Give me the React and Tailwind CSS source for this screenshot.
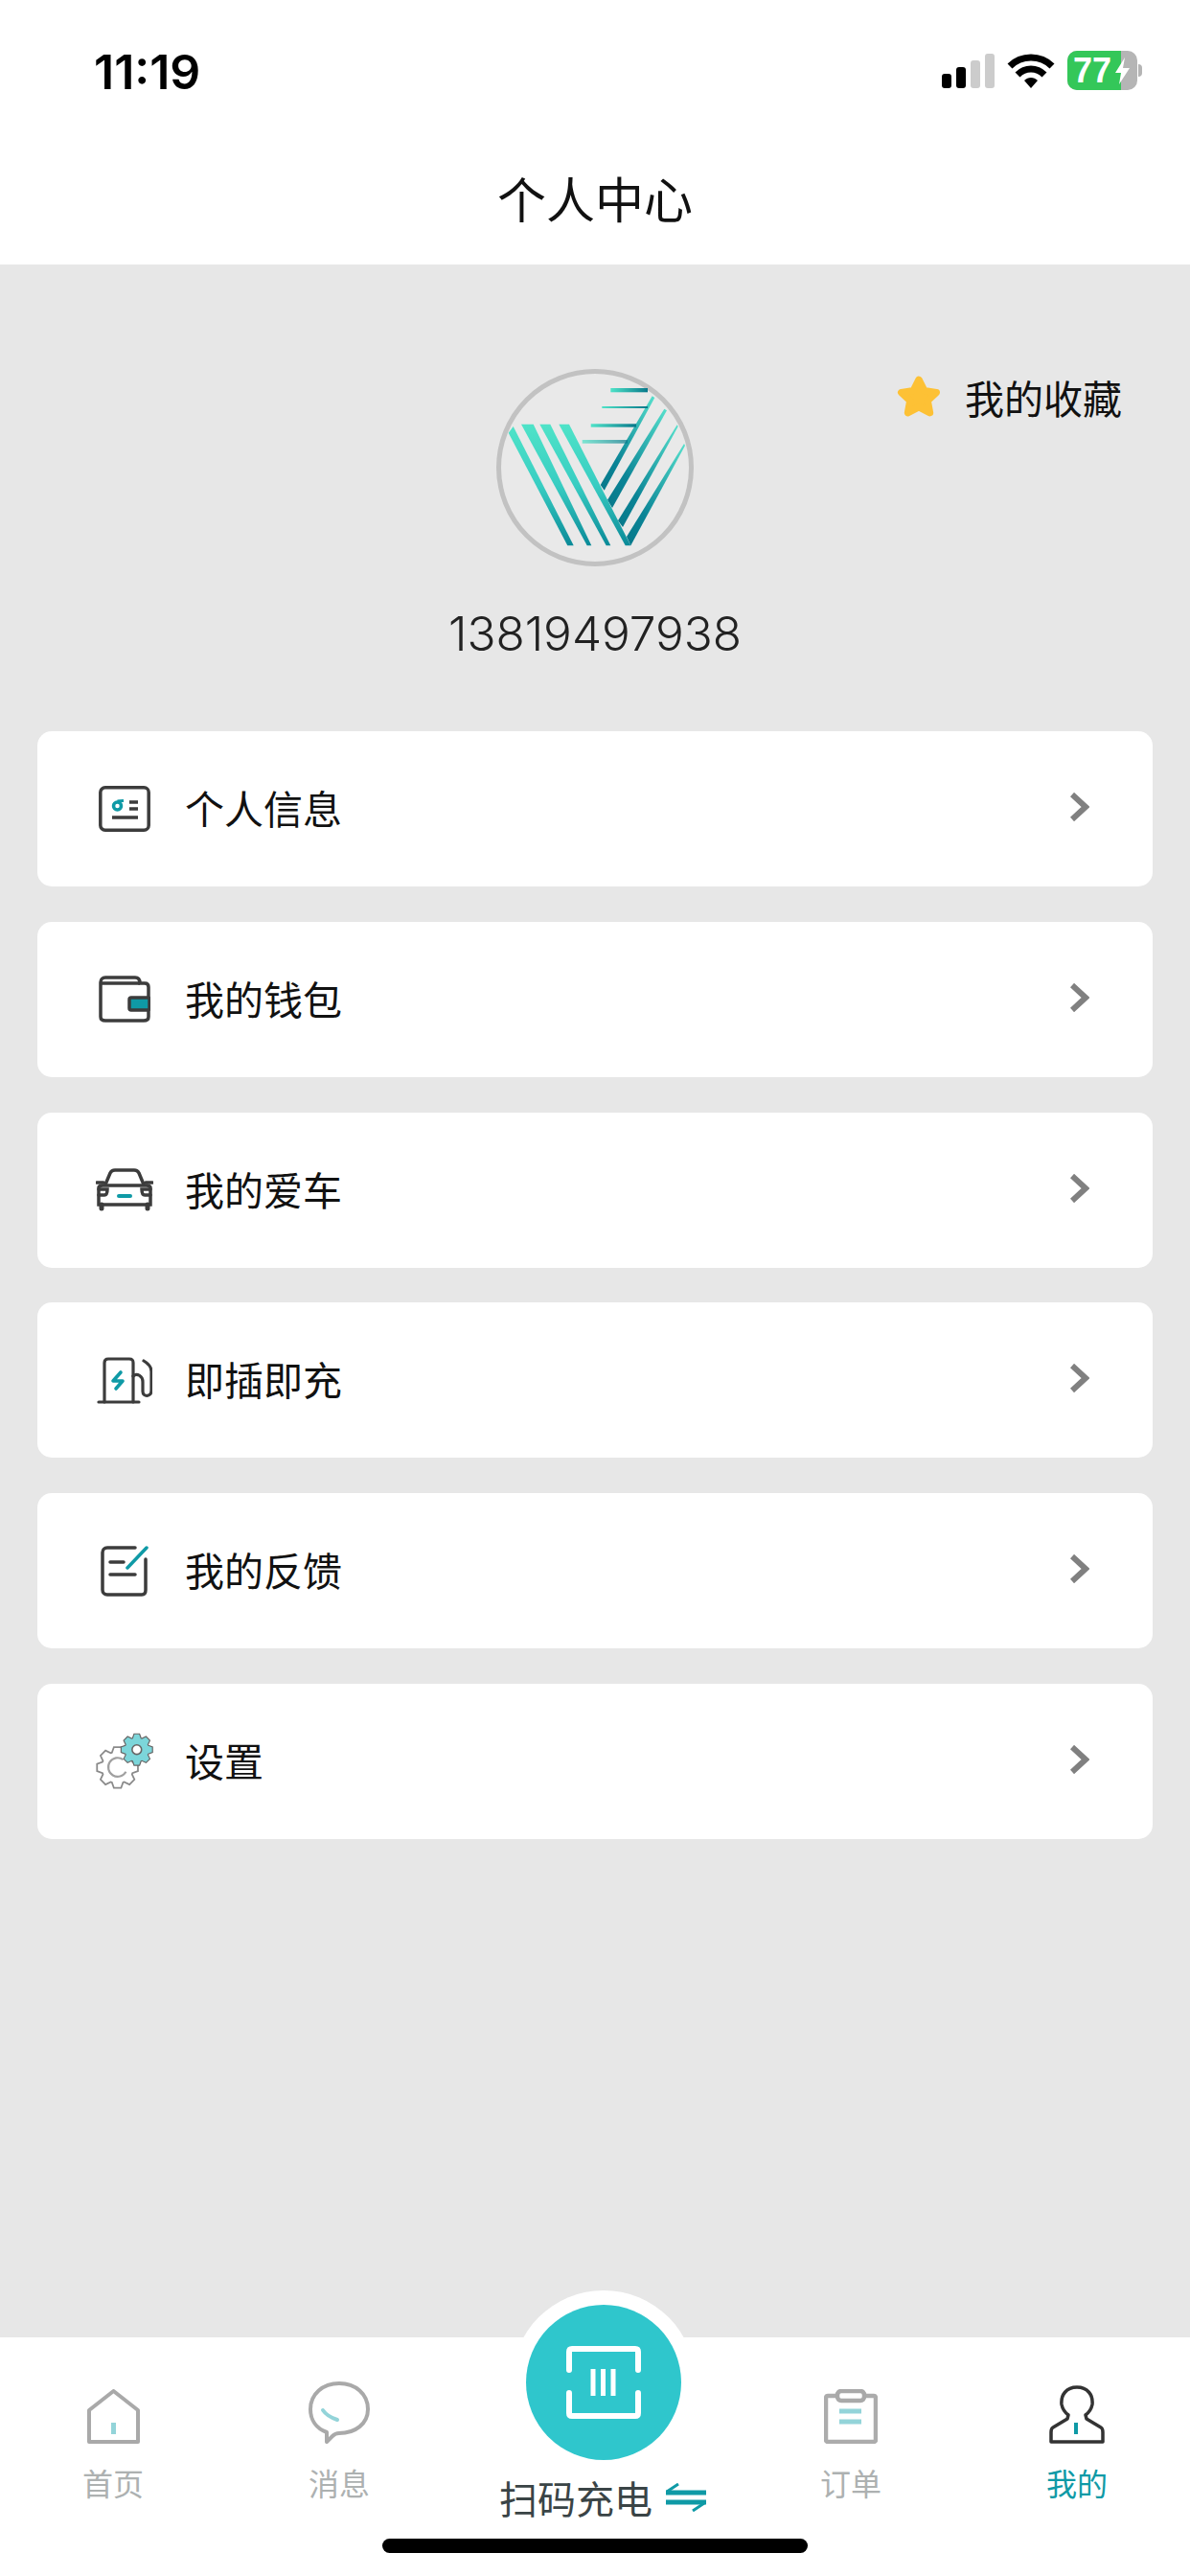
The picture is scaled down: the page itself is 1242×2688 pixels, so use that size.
import { useId } from "react";

const font = { fontFamily: '"Noto Sans CJK SC", "Noto Sans", sans-serif' };

function Signal() {
  return (
    <svg width="55" height="36" viewBox="0 0 55 36">
      <rect x="0" y="21" width="10" height="15" rx="3" fill="#000" />
      <rect x="15" y="14" width="10" height="22" rx="3" fill="#000" />
      <rect x="30" y="7" width="10" height="29" rx="3" fill="#ccc" />
      <rect x="45" y="0" width="10" height="36" rx="3" fill="#ccc" />
    </svg>
  );
}

function Wifi() {
  return (
    <svg width="50" height="38" viewBox="0 0 50 38" fill="none">
      <path d="M3 14 C15 2 35 2 47 14" stroke="#000" strokeWidth="7" />
      <path d="M11 23 C19 15 31 15 39 23" stroke="#000" strokeWidth="7" />
      <path d="M18 29 C22 25 28 25 32 29 L25 37 Z" fill="#000" />
    </svg>
  );
}

function Battery() {
  return (
    <div className="relative flex items-center">
      <div className="relative flex h-[41px] w-[73px] items-center overflow-hidden rounded-[10px] bg-[#b5b5b5]">
        <div className="absolute inset-y-0 left-0 w-[56px] bg-[#34c759]" />
        <span className="relative pl-[6px] text-[36px] font-bold leading-none text-white" style={{ fontFamily: '"Liberation Sans", sans-serif' }}>
          77
        </span>
        <svg className="absolute left-[49px] top-[7px]" width="17" height="28" viewBox="0 0 17 28">
          <path d="M11 0 L1 16 H7 L5 28 L16 11 H9 Z" fill="#fff" />
        </svg>
      </div>
      <div className="ml-[1px] h-[13px] w-[4px] rounded-r-full bg-[#b5b5b5]" />
    </div>
  );
}

function Logo() {
  const id = useId();
  const left = `${id}l`;
  const right = `${id}r`;
  const bar = `${id}b`;
  return (
    <svg width="208" height="208" viewBox="0 0 208 208">
      <defs>
        <linearGradient id={left} x1="0" y1="0" x2="0" y2="1">
          <stop offset="0" stopColor="#4fe3c8" />
          <stop offset="0.5" stopColor="#38cdc2" />
          <stop offset="1" stopColor="#0a8a98" />
        </linearGradient>
        <linearGradient id={right} x1="1" y1="0" x2="0" y2="1">
          <stop offset="0" stopColor="#56e0cc" />
          <stop offset="0.7" stopColor="#0a8496" />
          <stop offset="1" stopColor="#07788a" />
        </linearGradient>
        <linearGradient id={bar} x1="0" y1="0" x2="1" y2="0">
          <stop offset="0" stopColor="#4fe3c8" />
          <stop offset="1" stopColor="#07788a" />
        </linearGradient>
      </defs>
      <circle cx="104" cy="104" r="100.5" fill="#e9e9e9" stroke="#c2c2c2" strokeWidth="5" />
      {/* right strokes of the V */}
      <path d="M109.7 122 L163.7 29.3 L166.3 31 L113.7 127.7 Z" fill={`url(#${right})`} />
      <path d="M117 137.7 L176.3 42.7 L179 44.3 L122 146 Z" fill={`url(#${right})`} />
      <path d="M128 159.3 L189.7 59.3 L190.7 61 L133 166 Z" fill={`url(#${right})`} />
      <path d="M137 176 L197 79 L198 81 L141.3 185.3 Z" fill={`url(#${right})`} />
      {/* left strokes of the V */}
      <path d="M13.7 67.7 L18.7 61 L81.7 185.3 L75.3 185.3 Z" fill={`url(#${left})`} />
      <path d="M27 58.7 L39.7 58.7 L100.3 185.3 L95.7 185.3 Z" fill={`url(#${left})`} />
      <path d="M46.3 58.7 L57.3 58.7 L120.3 185.3 L115.7 185.3 Z" fill={`url(#${left})`} />
      <path d="M66.3 58.7 L77 58.7 L141.3 185.3 L135.7 185.3 Z" fill={`url(#${left})`} />
      {/* speed lines */}
      <rect x="120.3" y="21" width="38.7" height="4.3" fill={`url(#${bar})`} />
      <rect x="111.3" y="40" width="47.7" height="2" fill={`url(#${bar})`} />
      <rect x="99.7" y="58.3" width="47.3" height="3.4" fill={`url(#${bar})`} />
      <rect x="90.7" y="75" width="47.3" height="3.7" fill={`url(#${bar})`} opacity="0.7" />
    </svg>
  );
}

const dark = "#3c3c3c";
const teal = "#0f9aa6";

function InfoIcon() {
  return (
    <svg width="54" height="48" viewBox="0 0 54 48" fill="none" stroke={dark} strokeWidth="3.5">
      <rect x="1.8" y="1.8" width="50.4" height="44.4" rx="5" />
      <circle cx="19.5" cy="21" r="4" stroke={teal} strokeWidth="3.5" />
      <path d="M19.5 16 L26 15.5" stroke={teal} strokeWidth="3" />
      <path d="M32 17 H41 M32 24 H41 M14 33 H41" />
    </svg>
  );
}

function WalletIcon() {
  return (
    <svg width="54" height="49" viewBox="0 0 54 49" fill="none" stroke={dark} strokeWidth="3.5">
      <path d="M2 7 C2 4 4 2 7 2 H38 C41 2 43 4 43 8 H48 C51 8 52 10 52 12 V43 C52 46 50 47 47 47 H7 C4 47 2 46 2 43 Z" />
      <path d="M2 8 H43" />
      <rect x="32" y="23" width="21" height="13" rx="2" fill={teal} />
    </svg>
  );
}

function CarIcon() {
  return (
    <svg width="60" height="45" viewBox="0 0 60 45" fill="none" stroke={dark} strokeWidth="3.5" strokeLinecap="round">
      <path d="M10 17 L15 5 C16 3 18 2 20 2 H40 C42 2 44 3 45 5 L50 17" />
      <path d="M1 15 H8 M52 15 H59" />
      <path d="M3 20 C3 19 5 18 7 18 H53 C55 18 57 19 57 20 V38 H3 Z" />
      <path d="M3 28 H9 C11 28 12 26 12 22 H3 M57 28 H51 C49 28 48 26 48 22 H57" />
      <path d="M6 38 V42 M54 38 V42" strokeWidth="5" />
      <path d="M24 29 H36" stroke={teal} strokeWidth="4" />
    </svg>
  );
}

function ChargeIcon() {
  return (
    <svg width="58" height="49" viewBox="0 0 58 49" fill="none" stroke={dark} strokeWidth="3.2" strokeLinecap="round">
      <path d="M8 47 V6 C8 3 10 2 12 2 H34 C37 2 38 3 38 6 V47" />
      <path d="M2 47 H44" />
      <path d="M38 20 C42 16 48 20 48 26 V36 C48 42 57 42 57 35 V15 C57 10 54 7 49 4" />
      <path d="M25 16 L17 25 H27 L20 33" stroke={teal} strokeWidth="3.6" strokeLinejoin="round" />
    </svg>
  );
}

function NoteIcon() {
  return (
    <svg width="50" height="53" viewBox="0 0 50 53" fill="none" stroke={dark} strokeWidth="3.5" strokeLinecap="round">
      <path d="M36 2 H7 C4 2 2 4 2 7 V46 C2 49 4 51 7 51 H43 C46 51 47 49 47 46 V14" />
      <path d="M10 17 H24 M10 30 H36" />
      <path d="M28 23 L48 2" stroke={teal} strokeWidth="3.5" />
    </svg>
  );
}

function gearPath(cx, cy, outer, inner, teeth) {
  let d = "";
  const step = (Math.PI * 2) / teeth;
  for (let i = 0; i < teeth; i++) {
    const a = i * step;
    const pts = [
      [a - step * 0.45, inner],
      [a - step * 0.22, outer],
      [a + step * 0.22, outer],
      [a + step * 0.45, inner],
    ];
    for (const [ang, r] of pts) {
      const x = (cx + Math.cos(ang) * r).toFixed(1);
      const y = (cy + Math.sin(ang) * r).toFixed(1);
      d += `${d ? "L" : "M"}${x} ${y} `;
    }
  }
  return d + "Z";
}

function GearsIcon() {
  return (
    <svg width="61" height="59" viewBox="0 0 61 59" fill="none">
      <path d={gearPath(23, 36.5, 22, 17, 8)} stroke="#8a8a8a" strokeWidth="1.8" fill="#fff" />
      <path d="M29 28 A10 10 0 1 0 32 41" stroke="#a0a0a0" strokeWidth="2.2" />
      <path d={gearPath(43.5, 17.5, 17, 13, 8)} stroke="#666" strokeWidth="1.2" fill="#7cd6da" />
      <circle cx="43.5" cy="17.5" r="5" fill="#fff" stroke="#666" strokeWidth="1.6" />
    </svg>
  );
}

function Chevron() {
  return (
    <svg className="mb-[4px]" width="20" height="30" viewBox="0 0 20 30" fill="none">
      <path d="M2 2 L16 15 L2 28" stroke="#808080" strokeWidth="6" strokeLinejoin="miter" />
    </svg>
  );
}

const menu = [
  { label: "个人信息", icon: <InfoIcon /> },
  { label: "我的钱包", icon: <WalletIcon /> },
  { label: "我的爱车", icon: <CarIcon /> },
  { label: "即插即充", icon: <ChargeIcon /> },
  { label: "我的反馈", icon: <NoteIcon /> },
  { label: "设置", icon: <GearsIcon /> },
];

function MenuRow({ label, icon }) {
  return (
    <div className="flex h-[162px] items-center rounded-[15px] bg-white pl-[61px] pr-[66px]">
      <div className="flex w-[60px] justify-center">{icon}</div>
      <span className="ml-[33px] flex-1 pb-[3px] text-[41px] leading-none text-[#111]">{label}</span>
      <Chevron />
    </div>
  );
}

function TabItem({ label, active, icon }) {
  return (
    <div className="flex flex-col items-center">
      <div className="flex h-[66px] items-end">{icon}</div>
      <span className={`mt-[24px] text-[32px] leading-none ${active ? "text-[#0f9aa6]" : "text-[#adb1b1]"}`}>{label}</span>
    </div>
  );
}

const gray = "#a9a9a9";
const lightTeal = "#93d4d9";

function HomeTab() {
  return (
    <svg width="55" height="57" viewBox="0 0 55 57" fill="none" stroke={gray} strokeWidth="4" strokeLinejoin="round">
      <path d="M2 55 V22 L27.5 2 L53 22 V55 Z" />
      <path d="M27.5 35 V47" stroke={lightTeal} strokeWidth="5" />
    </svg>
  );
}

function MsgTab() {
  return (
    <svg width="64" height="65" viewBox="0 0 64 65" fill="none" stroke={gray} strokeWidth="4" strokeLinejoin="round">
      <path d="M32 2 C49 2 62 13 62 29 C62 44 49 54 32 54 C29 54 27 55 25 57 L19 63 V53 C8 49 2 40 2 29 C2 13 15 2 32 2 Z" />
      <path d="M15 30 C19 36 24 38 30 40" stroke={lightTeal} strokeWidth="4" strokeLinecap="round" />
    </svg>
  );
}

function OrderTab() {
  return (
    <svg width="56" height="57" viewBox="0 0 56 57" fill="none" stroke={gray} strokeWidth="4.5">
      <path d="M13 7 H4 C3 7 2 8 2 10 V53 C2 54 3 55 4 55 H52 C53 55 54 54 54 53 V10 C54 8 53 7 52 7 H43" stroke="#acacac" />
      <rect x="14" y="2" width="28" height="10" rx="4" />
      <path d="M16 23 H39 M16 34 H39" stroke={lightTeal} strokeWidth="5" />
    </svg>
  );
}

function MeTab() {
  return (
    <svg width="58" height="61" viewBox="0 0 58 61" fill="none" stroke="#333" strokeWidth="3.5" strokeLinejoin="round">
      <path d="M29 2 C40 2 46 10 45 20 C44 25 42 28 38 31 L39 35 L54 44 C56 45 56 47 56 49 V59 H2 V49 C2 47 2 45 4 44 L19 35 L20 31 C16 28 14 25 13 20 C12 10 18 2 29 2 Z" />
      <path d="M28 39 V51" stroke={teal} strokeWidth="4" />
    </svg>
  );
}

function ScanIcon() {
  return (
    <svg width="78" height="76" viewBox="0 0 78 76" fill="none" stroke="#fff" strokeWidth="6" strokeLinecap="round" strokeLinejoin="round">
      <path d="M3 25 V6 C3 4 4 3 6 3 H72 C74 3 75 4 75 6 V25" />
      <path d="M3 49 V70 C3 72 4 73 6 73 H72 C74 73 75 72 75 70 V49" />
      <path d="M28 24 V52 M38.5 24 V52 M49 24 V52" strokeLinecap="butt" strokeWidth="5" />
    </svg>
  );
}

function SwapIcon() {
  return (
    <svg width="43" height="30" viewBox="0 0 43 30" fill="none" stroke="#0f9aa6" strokeWidth="5">
      <path d="M1 10 H43 M43 20 H1" />
      <path d="M2 9 L14 1 M41 21 L29 29" strokeWidth="3" />
    </svg>
  );
}

export default function App() {
  return (
    <div className="relative flex h-[2688px] w-[1242px] flex-col overflow-hidden bg-[#e7e7e7]" style={font}>
      {/* status bar + title */}
      <header className="h-[276px] bg-white">
        <div className="flex h-[181px] items-start justify-between pl-[98px] pr-[50px] pt-[50px]">
          <span className="text-[50px] font-semibold leading-none text-black" style={{ fontFamily: '"Inter", sans-serif' }}>
            11:19
          </span>
          <div className="flex items-center gap-[13px] pt-[3px]">
            <Signal />
            <Wifi />
            <Battery />
          </div>
        </div>
        <h1 className="text-center text-[51px] font-normal leading-none text-[#111]">个人中心</h1>
      </header>

      {/* profile */}
      <main className="flex-1 px-[39px]">
        <div className="relative flex h-[487px] flex-col items-center pt-[108px]">
          <Logo />
          <p className="mt-[45px] text-[49.5px] leading-none text-[#222]" style={{ fontFamily: '"Inter", sans-serif', fontWeight: 300 }}>
            13819497938
          </p>
          <div className="absolute right-[32px] top-[115px] flex items-center gap-[25px]">
            <svg width="46" height="46" viewBox="0 0 44 44">
              <path d="M22 5 L27.5 16 L39.5 17.7 L30.8 26 L33 38 L22 32.2 L11 38 L13.2 26 L4.5 17.7 L16.5 16 Z" fill="#fdc135" stroke="#fdc135" strokeWidth="7" strokeLinejoin="round" />
            </svg>
            <span className="text-[41px] leading-none text-[#111]">我的收藏</span>
          </div>
        </div>

        <div className="flex flex-col gap-[36.8px]">
          {menu.map((m) => (
            <MenuRow key={m.label} label={m.label} icon={m.icon} />
          ))}
        </div>
      </main>

      {/* tab bar */}
      <nav className="relative h-[249px] bg-white">
        <div className="grid grid-cols-[236px_236px_298px_236px_236px] pt-[45px]">
          <TabItem label="首页" icon={<HomeTab />} />
          <TabItem label="消息" icon={<MsgTab />} />
          <div />
          <TabItem label="订单" icon={<OrderTab />} />
          <TabItem label="我的" active icon={<MeTab />} />
        </div>

        {/* raised scan button */}
        <div className="absolute left-[534px] top-[-49px] flex h-[192px] w-[192px] items-center justify-center rounded-full bg-white">
          <div className="flex h-[162px] w-[162px] items-center justify-center rounded-full bg-[#2fc6cc]">
            <ScanIcon />
          </div>
        </div>
        <div className="absolute left-[521px] top-[147px] flex items-center gap-[13px]">
          <span className="text-[40px] leading-none text-[#3a4446]">扫码充电</span>
          <SwapIcon />
        </div>

        <div className="absolute bottom-[24px] left-[399px] h-[15px] w-[444px] rounded-full bg-black" />
      </nav>
    </div>
  );
}
